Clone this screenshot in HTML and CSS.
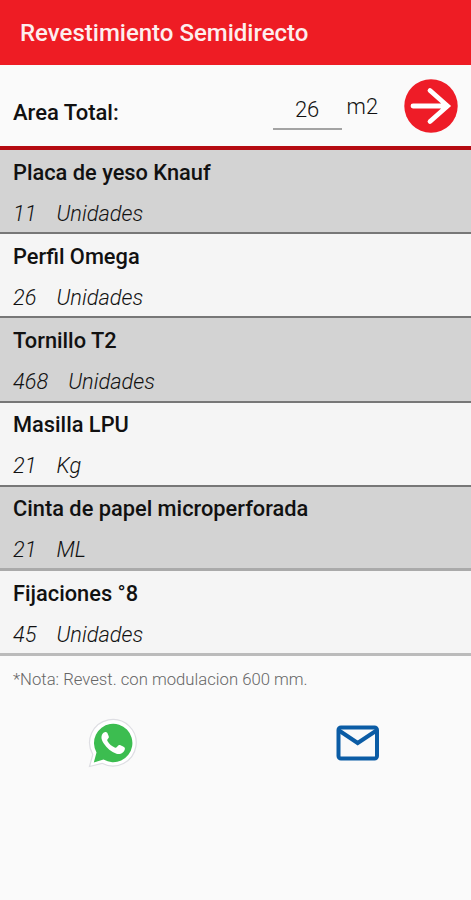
FILE: index.html
```
<!DOCTYPE html>
<html lang="es">
<head>
<meta charset="utf-8">
<title>Revestimiento Semidirecto</title>
<link rel="stylesheet" href="styles.css">
</head>
<body>

<header class="toolbar">
  <h1>Revestimiento Semidirecto</h1>
</header>

<div class="area">
  <span class="area-label">Area Total:</span>
  <span class="area-value">26</span>
  <span class="area-unit">m2</span>
  <svg class="go" viewBox="0 0 54 54">
    <circle cx="27" cy="27" r="26.7" fill="#ee1c27"/>
    <path d="M9 27H43M26 11.500L43.500 27L26 42.500" fill="none" stroke="#fff" stroke-width="4.800" stroke-linecap="round"/>
  </svg>
</div>

<ul class="materials">
  <li><b>Placa de yeso Knauf</b><p><span>11</span><span>Unidades</span></p></li>
  <li><b>Perfil Omega</b><p><span>26</span><span>Unidades</span></p></li>
  <li><b>Tornillo T2</b><p><span>468</span><span>Unidades</span></p></li>
  <li><b>Masilla LPU</b><p><span>21</span><span>Kg</span></p></li>
  <li><b>Cinta de papel microperforada</b><p><span>21</span><span>ML</span></p></li>
  <li><b>Fijaciones <span class="degree">°</span>8</b><p><span>45</span><span>Unidades</span></p></li>
</ul>

<p class="note">*Nota: Revest. con modulacion 600 mm.</p>

<div class="share">
  <svg class="whatsapp" viewBox="0 0 50 50">
    <path d="M1.500 48.500L4.800 36.500A23.300 23.300 0 1 1 14 45.300Z" fill="#fff" stroke="#dedee3" stroke-width="1.200"/>
    <path d="M5.800 44.400L8.500 34.500A19.200 19.200 0 1 1 15.500 41.600Z" fill="#3cbd50"/>
    <path d="M18.300 14.200C17 13.500 15.700 14.400 14.600 15.800C12.600 18.600 13.500 22.200 15.600 25.300C19 30.400 23.100 34 28.500 35.700C32.200 36.900 36.700 34.400 36.900 30.700C37 29.600 36.500 29.200 32 27.100C31.200 26.700 30.700 27 30.200 27.600C28.300 30 27.900 30.100 26.700 29.500C23.600 28 21.300 26 19.600 23.200C18.900 22 19.100 21.700 20.700 19.700C21.100 19.100 20.900 18.700 19.500 15.300C19.200 14.600 18.900 14.300 18.300 14.200Z" fill="#fff"/>
  </svg>
  <svg class="mail" viewBox="0 0 44 36">
    <rect x="2.500" y="2.500" width="38.500" height="31" rx="2.500" fill="none" stroke="#0b5ca5" stroke-width="4"/>
    <path d="M3 5.500L21.700 18L40.500 5.500" fill="none" stroke="#0b5ca5" stroke-width="4"/>
  </svg>
</div>

</body>
</html>
```

FILE: styles.css
```
body {
  margin: 0;
  background-color: #fafafa;
  font-family: Roboto, sans-serif;
  color: #111;
}

.toolbar {
  height: 65px;
  box-sizing: border-box;
  padding: 19px 20px 0;
  background-color: #ee1c24;
}

.toolbar h1 {
  margin: 0;
  font-size: 24px;
  line-height: 28px;
  font-weight: 500;
  color: #fdeeee;
}

.area {
  display: flex;
  height: 81px;
  padding: 0 13px;
  border-bottom: 4px solid #b50b12;
  font-size: 22px;
  line-height: 28px;
}

.area-label {
  flex: 1;
  padding-top: 34px;
  font-weight: 500;
}

.area-value {
  width: 69px;
  height: 32px;
  margin-top: 31px;
  border-bottom: 2px solid #a3a3a3;
  text-align: center;
  font-weight: 300;
}

.area-unit {
  margin: 28px 26px 0 5px;
  font-size: 21.800px;
  font-weight: 300;
}

.go {
  width: 54px;
  height: 54px;
  margin-top: 14px;
}

.materials {
  list-style-type: none;
  margin: 0;
  padding: 0;
}

.materials li {
  height: 84.200px;
  box-sizing: border-box;
  padding: 8.600px 13px 0;
  border-bottom: 2px solid #777;
  background-color: #f5f5f5;
  font-size: 21.800px;
  line-height: 28px;
}

.materials li:nth-child(odd) {
  background-color: #d3d3d3;
}

.materials li:nth-child(n+5) {
  border-bottom: 3px solid #aaa;
}

.materials li:last-child {
  height: 85px;
  border-bottom-color: #bbb;
}

.materials b {
  display: block;
  font-weight: 500;
}

.degree {
  font-weight: 400;
}

.materials p {
  display: flex;
  gap: 20px;
  margin: 13px 0 0;
  font-weight: 300;
  font-style: italic;
}

.note {
  margin: 13px 13px 0;
  font-size: 16.700px;
  line-height: 22px;
  font-weight: 300;
  color: #666;
}

.share {
  display: flex;
  justify-content: space-between;
  align-items: center;
  margin-top: 27px;
  padding: 0 91px 0 88px;
}

.whatsapp {
  width: 50px;
  height: 50px;
}

.mail {
  width: 44px;
  height: 36px;
}
```
